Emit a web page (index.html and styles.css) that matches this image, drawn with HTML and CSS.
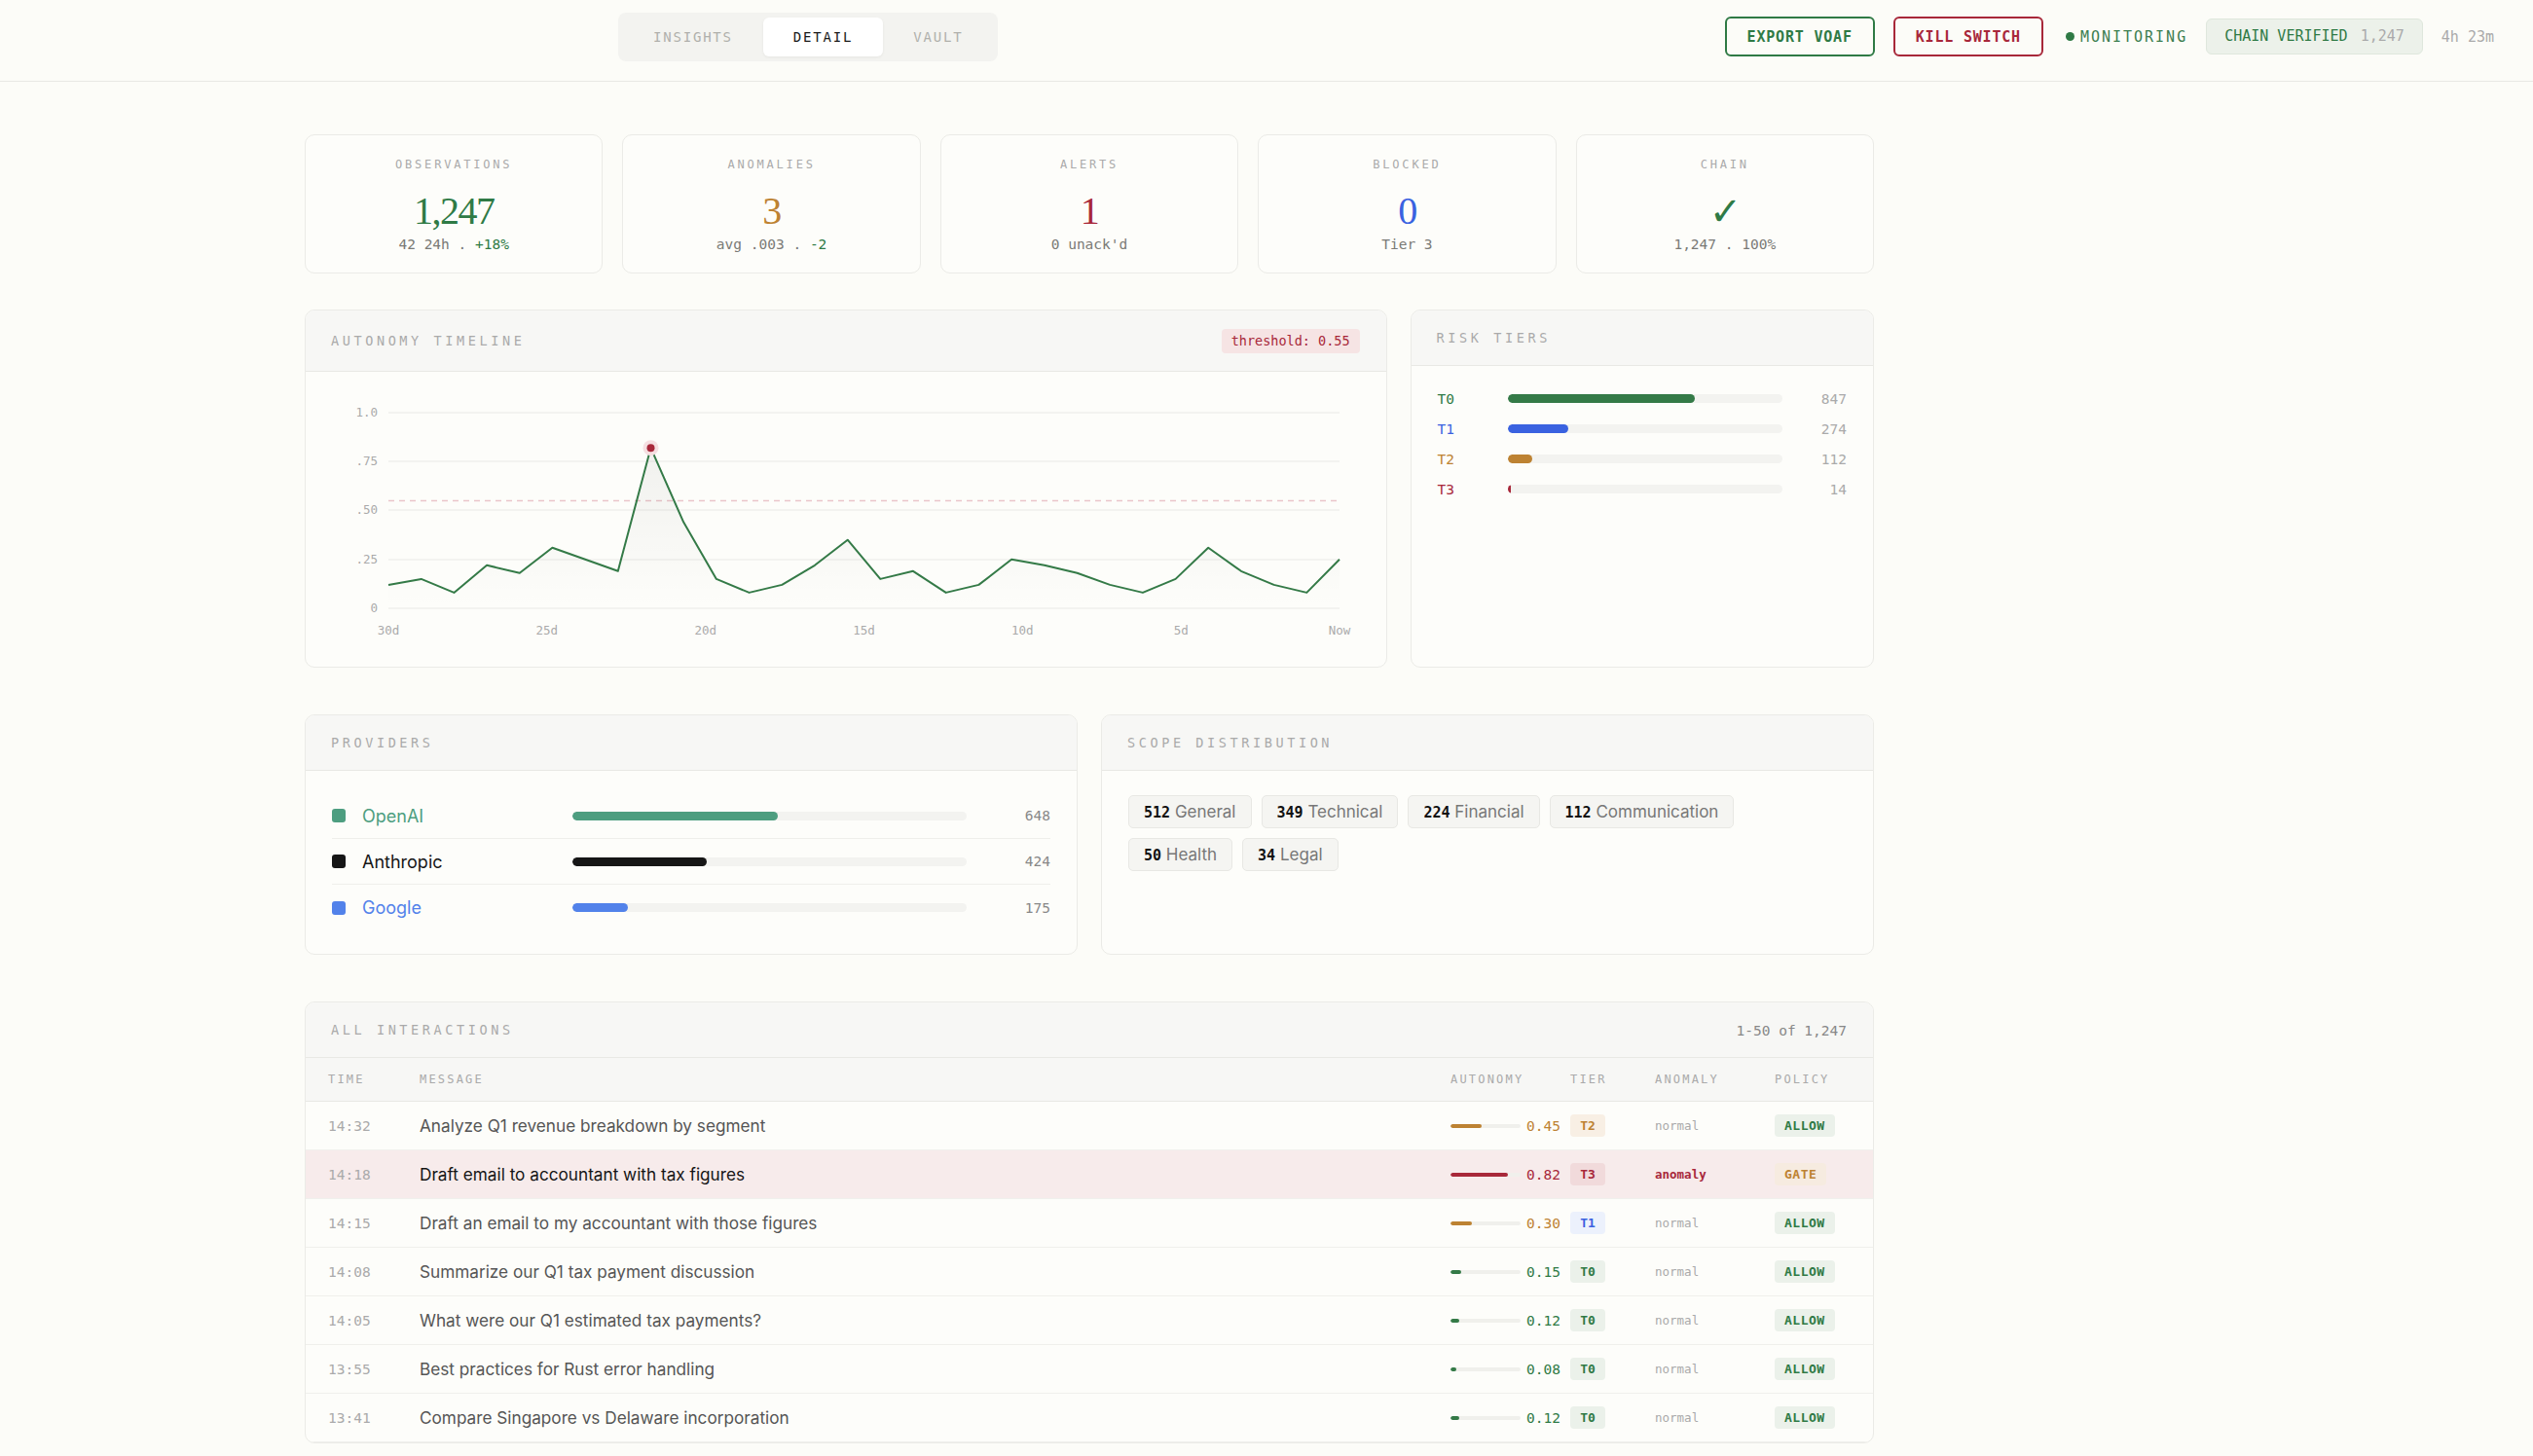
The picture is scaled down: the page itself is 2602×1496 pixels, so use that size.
FILE: index.html
```html
<!DOCTYPE html>
<html lang="en">
<head>
 <meta charset="UTF-8">
 <title>Detail</title>
 <link rel="stylesheet" href="styles.css">
</head>
<body>

 <header class="topbar">
  <nav class="tabs">
   <span class="tab">INSIGHTS</span>
   <span class="tab active">DETAIL</span>
   <span class="tab">VAULT</span>
  </nav>

  <div class="topbar-right">
   <button class="btn btn-green">EXPORT VOAF</button>
   <button class="btn btn-red">KILL SWITCH</button>
   <span class="monitoring"><i class="dot"></i>MONITORING</span>
   <span class="chain-pill">CHAIN VERIFIED <em>1,247</em></span>
   <span class="uptime">4h 23m</span>
  </div>
 </header>

 <main class="page">

  <section class="stats">
   <div class="stat">
    <div class="stat-label">OBSERVATIONS</div>
    <div class="stat-value green">1,247</div>
    <div class="stat-sub">42 24h . <span class="green">+18%</span></div>
   </div>
   <div class="stat">
    <div class="stat-label">ANOMALIES</div>
    <div class="stat-value orange">3</div>
    <div class="stat-sub">avg .003 . <span class="green">-2</span></div>
   </div>
   <div class="stat">
    <div class="stat-label">ALERTS</div>
    <div class="stat-value red">1</div>
    <div class="stat-sub">0 unack'd</div>
   </div>
   <div class="stat">
    <div class="stat-label">BLOCKED</div>
    <div class="stat-value blue">0</div>
    <div class="stat-sub">Tier 3</div>
   </div>
   <div class="stat">
    <div class="stat-label">CHAIN</div>
    <div class="stat-value green check">&#10003;</div>
    <div class="stat-sub">1,247 . 100%</div>
   </div>
  </section>

  <section class="row row-timeline">
   <div class="card">
    <div class="card-head">
     <span class="card-title">AUTONOMY TIMELINE</span>
     <span class="threshold">threshold: 0.55</span>
    </div>
    <div class="chart">
     <svg viewBox="0 0 1109 303" width="1109" height="303">
      <defs>
       <linearGradient id="fade" x1="0" y1="0" x2="0" y2="1">
        <stop offset="0" stop-color="#000" stop-opacity="0.05"/>
        <stop offset="1" stop-color="#000" stop-opacity="0"/>
       </linearGradient>
      </defs>
      <g class="grid">
       <line x1="85" y1="42" x2="1062" y2="42"/>
       <line x1="85" y1="92" x2="1062" y2="92"/>
       <line x1="85" y1="142" x2="1062" y2="142"/>
       <line x1="85" y1="193" x2="1062" y2="193"/>
       <line x1="85" y1="243" x2="1062" y2="243"/>
      </g>
      <g class="ylabels">
       <text x="74" y="46">1.0</text>
       <text x="74" y="96">.75</text>
       <text x="74" y="146">.50</text>
       <text x="74" y="197">.25</text>
       <text x="74" y="247">0</text>
      </g>
      <line class="threshold-line" x1="85" y1="132.5" x2="1062" y2="132.5"/>
      <path class="area" d="M85,243 L85,218.9 118.7,212.9 152.4,226.9 186.1,198.8 219.8,206.8 253.4,180.7 287.1,192.8 320.8,204.8 354.5,78.2 388.2,154.6 421.9,212.9 455.6,226.9 489.3,218.9 523,198.8 556.7,172.7 590.3,212.9 624,204.8 657.7,226.9 691.4,218.9 725.1,192.8 758.8,198.8 792.5,206.8 826.2,218.9 859.9,226.9 893.6,212.9 927.2,180.7 960.9,204.8 994.6,218.9 1028.3,226.9 1062,192.8 L1062,243 Z"/>
      <polyline class="line" points="85,218.9 118.7,212.9 152.4,226.9 186.1,198.8 219.8,206.8 253.4,180.7 287.1,192.8 320.8,204.8 354.5,78.2 388.2,154.6 421.9,212.9 455.6,226.9 489.3,218.9 523,198.8 556.7,172.7 590.3,212.9 624,204.8 657.7,226.9 691.4,218.9 725.1,192.8 758.8,198.8 792.5,206.8 826.2,218.9 859.9,226.9 893.6,212.9 927.2,180.7 960.9,204.8 994.6,218.9 1028.3,226.9 1062,192.8"/>
      <circle cx="354.5" cy="78.2" r="8" fill="#f5dfe1"/>
      <circle cx="354.5" cy="78.2" r="4" fill="#a8283a"/>
      <g class="xlabels">
       <text x="85" y="270">30d</text>
       <text x="247.8" y="270">25d</text>
       <text x="410.7" y="270">20d</text>
       <text x="573.5" y="270">15d</text>
       <text x="736.3" y="270">10d</text>
       <text x="899.2" y="270">5d</text>
       <text x="1062" y="270">Now</text>
      </g>
     </svg>
    </div>
   </div>

   <div class="card">
    <div class="card-head">
     <span class="card-title">RISK TIERS</span>
    </div>
    <div class="tiers">
     <div class="tier-row">
      <span class="tier-name green">T0</span>
      <div class="track"><div class="fill bg-green" style="width: 68%"></div></div>
      <span class="tier-count">847</span>
     </div>
     <div class="tier-row">
      <span class="tier-name blue">T1</span>
      <div class="track"><div class="fill bg-blue" style="width: 22%"></div></div>
      <span class="tier-count">274</span>
     </div>
     <div class="tier-row">
      <span class="tier-name orange">T2</span>
      <div class="track"><div class="fill bg-orange" style="width: 9%"></div></div>
      <span class="tier-count">112</span>
     </div>
     <div class="tier-row">
      <span class="tier-name red">T3</span>
      <div class="track"><div class="fill bg-red" style="width: 1.1%"></div></div>
      <span class="tier-count">14</span>
     </div>
    </div>
   </div>
  </section>

  <section class="row row-half">
   <div class="card">
    <div class="card-head">
     <span class="card-title">PROVIDERS</span>
    </div>
    <div class="providers">
     <div class="provider">
      <span class="provider-name openai"><i class="sq"></i>OpenAI</span>
      <div class="track"><div class="fill" style="width: 52%; background: #4d9e80"></div></div>
      <span class="provider-count">648</span>
     </div>
     <div class="provider">
      <span class="provider-name anthropic"><i class="sq"></i>Anthropic</span>
      <div class="track"><div class="fill" style="width: 34%; background: #161616"></div></div>
      <span class="provider-count">424</span>
     </div>
     <div class="provider">
      <span class="provider-name google"><i class="sq"></i>Google</span>
      <div class="track"><div class="fill" style="width: 14%; background: #5282ea"></div></div>
      <span class="provider-count">175</span>
     </div>
    </div>
   </div>

   <div class="card">
    <div class="card-head">
     <span class="card-title">SCOPE DISTRIBUTION</span>
    </div>
    <div class="chips">
     <span class="chip"><b>512</b> General</span>
     <span class="chip"><b>349</b> Technical</span>
     <span class="chip"><b>224</b> Financial</span>
     <span class="chip"><b>112</b> Communication</span>
     <span class="chip"><b>50</b> Health</span>
     <span class="chip"><b>34</b> Legal</span>
    </div>
   </div>
  </section>

  <section class="card interactions">
   <div class="card-head">
    <span class="card-title">ALL INTERACTIONS</span>
    <span class="range">1-50 of 1,247</span>
   </div>
   <div class="irow ihead">
    <span>TIME</span>
    <span>MESSAGE</span>
    <span>AUTONOMY</span>
    <span>TIER</span>
    <span>ANOMALY</span>
    <span>POLICY</span>
   </div>

   <div class="irow">
    <span class="time">14:32</span>
    <span class="msg">Analyze Q1 revenue breakdown by segment</span>
    <span class="auto orange"><i class="mini"><b class="bg-orange" style="width: 45%"></b></i>0.45</span>
    <span><em class="tag t2">T2</em></span>
    <span class="anom">normal</span>
    <span><em class="policy allow">ALLOW</em></span>
   </div>
   <div class="irow flagged">
    <span class="time">14:18</span>
    <span class="msg">Draft email to accountant with tax figures</span>
    <span class="auto red"><i class="mini"><b class="bg-red" style="width: 82%"></b></i>0.82</span>
    <span><em class="tag t3">T3</em></span>
    <span class="anom hit">anomaly</span>
    <span><em class="policy gate">GATE</em></span>
   </div>
   <div class="irow">
    <span class="time">14:15</span>
    <span class="msg">Draft an email to my accountant with those figures</span>
    <span class="auto orange"><i class="mini"><b class="bg-orange" style="width: 30%"></b></i>0.30</span>
    <span><em class="tag t1">T1</em></span>
    <span class="anom">normal</span>
    <span><em class="policy allow">ALLOW</em></span>
   </div>
   <div class="irow">
    <span class="time">14:08</span>
    <span class="msg">Summarize our Q1 tax payment discussion</span>
    <span class="auto green"><i class="mini"><b class="bg-green" style="width: 15%"></b></i>0.15</span>
    <span><em class="tag t0">T0</em></span>
    <span class="anom">normal</span>
    <span><em class="policy allow">ALLOW</em></span>
   </div>
   <div class="irow">
    <span class="time">14:05</span>
    <span class="msg">What were our Q1 estimated tax payments?</span>
    <span class="auto green"><i class="mini"><b class="bg-green" style="width: 12%"></b></i>0.12</span>
    <span><em class="tag t0">T0</em></span>
    <span class="anom">normal</span>
    <span><em class="policy allow">ALLOW</em></span>
   </div>
   <div class="irow">
    <span class="time">13:55</span>
    <span class="msg">Best practices for Rust error handling</span>
    <span class="auto green"><i class="mini"><b class="bg-green" style="width: 8%"></b></i>0.08</span>
    <span><em class="tag t0">T0</em></span>
    <span class="anom">normal</span>
    <span><em class="policy allow">ALLOW</em></span>
   </div>
   <div class="irow">
    <span class="time">13:41</span>
    <span class="msg">Compare Singapore vs Delaware incorporation</span>
    <span class="auto green"><i class="mini"><b class="bg-green" style="width: 12%"></b></i>0.12</span>
    <span><em class="tag t0">T0</em></span>
    <span class="anom">normal</span>
    <span><em class="policy allow">ALLOW</em></span>
   </div>
  </section>

 </main>

</body>
</html>
```

FILE: styles.css
```css
 * {
   box-sizing: border-box;
  }

 body {
   margin: 0;
   background-color: #fcfcf8;
   font-family: Inter, "Noto Sans", sans-serif;
   color: #1a1a1a;
  }

  /* colours */
  .green { color: #2f7a45; }
  .orange { color: #bd8232; }
  .red { color: #a8283a; }
  .blue { color: #3a62e0; }
  .bg-green { background: #347a47; }
  .bg-orange { background: #bd8232; }
  .bg-red { background: #a8283a; }
  .bg-blue { background: #3a62e0; }

  /* top bar */
  .topbar {
   height: 84px;
   padding: 0 40px 8px 635px;
   border-bottom: 1px solid #e8e8e4;
   display: flex;
   align-items: center;
   font-family: "DejaVu Sans Mono", monospace;
  }

  .tabs {
   display: flex;
   padding: 5px;
   background: #f3f3f0;
   border-radius: 8px;
  }

  .tab {
   height: 40px;
   line-height: 40px;
   padding: 0 31px;
   font-size: 14px;
   letter-spacing: 1.8px;
   color: #b0b0ac;
   border-radius: 6px;
  }

  .tab.active {
   background: #fff;
   color: #1a1a1a;
   box-shadow: 0 1px 3px rgba(0,0,0,0.06);
  }

  .topbar-right {
   margin-left: auto;
   display: flex;
   align-items: center;
   gap: 19px;
  }

  .btn {
   height: 41px;
   padding: 0 21px;
   background: transparent;
   border: 2px solid;
   border-radius: 6px;
   font-family: "DejaVu Sans Mono", monospace;
   font-size: 15px;
   font-weight: bold;
   letter-spacing: 0.8px;
   cursor: pointer;
  }

  .btn-green { color: #2f7a45; border-color: #2f7a45; }
  .btn-red { color: #a8283a; border-color: #a8283a; }

  .monitoring {
   display: flex;
   align-items: center;
   gap: 6px;
   font-size: 15px;
   letter-spacing: 2px;
   color: #3d7e50;
   margin-left: 4px;
  }

  .monitoring .dot {
   width: 9px;
   height: 9px;
   border-radius: 50%;
   background: #2f7a45;
  }

  .chain-pill {
   height: 37px;
   line-height: 35px;
   padding: 0 18px;
   background: #ecf1ea;
   border: 1px solid #dfe7dd;
   border-radius: 6px;
   font-size: 15px;
   color: #2f7a45;
  }

  .chain-pill em {
   font-style: normal;
   color: #aaa;
   margin-left: 4px;
  }

  .uptime {
   font-size: 15px;
   color: #aaa;
  }

  /* page */
  .page {
   width: 1612px;
   margin-left: 313px;
   padding: 54px 0 0;
  }

  .card {
   background: #fdfdfa;
   border: 1px solid #ebebe7;
   border-radius: 10px;
   overflow: hidden;
  }

  .card-head {
   display: flex;
   align-items: center;
   justify-content: space-between;
   padding: 19px 27px 18px 26px;
   background: #f7f7f5;
   border-bottom: 1px solid #e8e8e4;
  }

  .card-title {
   font-family: "DejaVu Sans Mono", monospace;
   font-size: 13.5px;
   line-height: 19px;
   letter-spacing: 3.6px;
   color: #aaa;
  }

  /* stats */
  .stats {
   display: grid;
   grid-template-columns: repeat(5, 1fr);
   gap: 20px;
   margin-bottom: 37px;
  }

  .stat {
   height: 143px;
   padding-top: 22px;
   text-align: center;
   background: #fdfdfa;
   border: 1px solid #ebebe7;
   border-radius: 10px;
  }

  .stat-label {
   font-family: "DejaVu Sans Mono", monospace;
   font-size: 12px;
   line-height: 16px;
   letter-spacing: 2.8px;
   color: #aaa;
  }

  .stat-value {
   margin-top: 18px;
   font-family: "Liberation Serif", serif;
   font-size: 40px;
   line-height: 44px;
   letter-spacing: -1.5px;
  }

  .stat-value.check {
   font-family: "DejaVu Sans", sans-serif;
   font-size: 40px;
   font-weight: bold;
  }

  .stat-sub {
   margin-top: 2px;
   font-family: "DejaVu Sans Mono", monospace;
   font-size: 14.5px;
   line-height: 20px;
   color: #7a7a76;
  }

  /* rows of cards */
  .row {
   display: grid;
   gap: 24px;
   margin-bottom: 48px;
  }

  .row-timeline {
   grid-template-columns: 7fr 3fr;
  }

  .row-half {
   grid-template-columns: 1fr 1fr;
  }

  .threshold {
   height: 25px;
   line-height: 25px;
   padding: 0 10px;
   background: #f6e4e4;
   border-radius: 4px;
   font-family: "DejaVu Sans Mono", monospace;
   font-size: 13.5px;
   color: #a8283a;
  }

  .chart svg {
   display: block;
  }

  .grid line {
   stroke: #efefec;
   stroke-width: 1.5;
  }

  .threshold-line {
   stroke: #eac5ca;
   stroke-width: 1.5;
   stroke-dasharray: 6 5;
  }

  .area {
   fill: url(#fade);
  }

  .line {
   fill: none;
   stroke: #347a47;
   stroke-width: 2;
   stroke-linejoin: round;
  }

  .ylabels text, .xlabels text {
   font-family: "DejaVu Sans Mono", monospace;
   font-size: 12.5px;
   fill: #aaa;
  }

  .ylabels text { text-anchor: end; }
  .xlabels text { text-anchor: middle; }

  /* risk tiers */
  .tiers {
   padding: 18px 27px 0;
  }

  .tier-row {
   display: grid;
   grid-template-columns: 72px 1fr 66px;
   align-items: center;
   height: 31px;
  }

  .tier-name {
   font-family: "DejaVu Sans Mono", monospace;
   font-size: 14.5px;
  }

  .tier-count, .provider-count {
   text-align: right;
   font-family: "DejaVu Sans Mono", monospace;
   font-size: 14.5px;
   color: #aaa;
  }

  .track {
   height: 9px;
   background: #f3f3f0;
   border-radius: 5px;
   overflow: hidden;
  }

  .fill {
   height: 100%;
   border-radius: 5px;
  }

  /* providers */
  .providers {
   padding: 23px 27px 24px;
  }

  .provider {
   display: grid;
   grid-template-columns: 247px 1fr 86px;
   align-items: center;
   height: 47px;
   border-bottom: 1px solid #efefeb;
  }

  .provider:last-child {
   border-bottom: none;
  }

  .provider-count {
   color: #888;
  }

  .provider-name {
   display: flex;
   align-items: center;
   gap: 17px;
   font-size: 18px;
  }

  .provider-name .sq {
   width: 14px;
   height: 14px;
   border-radius: 3px;
   background: currentColor;
  }

  .openai { color: #4d9e80; }
  .anthropic { color: #161616; }
  .google { color: #5282ea; }

  /* scope chips */
  .chips {
   display: flex;
   flex-wrap: wrap;
   gap: 10px;
   max-width: 700px;
   padding: 25px 27px;
  }

  .chip {
   height: 34px;
   line-height: 32px;
   padding: 0 15px;
   background: #f5f5f2;
   border: 1px solid #e8e8e4;
   border-radius: 5px;
   font-size: 17px;
   color: #777;
  }

  .chip b {
   font-family: "DejaVu Sans Mono", monospace;
   font-size: 15px;
   color: #111;
  }

  /* interactions */
  .interactions {
   margin-bottom: 40px;
  }

  .range {
   font-family: "DejaVu Sans Mono", monospace;
   font-size: 14.5px;
   color: #888;
  }

  .irow {
   display: grid;
   grid-template-columns: 94px 1fr 123px 87px 123px 75px;
   align-items: center;
   height: 50px;
   padding: 0 26px 0 23px;
   border-bottom: 1px solid #f0f0ec;
  }

  .irow.ihead {
   height: 45px;
   background: #f7f7f5;
   border-bottom: 1px solid #e8e8e4;
   font-family: "DejaVu Sans Mono", monospace;
   font-size: 12px;
   letter-spacing: 2.2px;
   color: #aaa;
  }

  .irow.flagged {
   background: #f7ebeb;
  }

  .time {
   font-family: "DejaVu Sans Mono", monospace;
   font-size: 14.5px;
   color: #aaa;
  }

  .msg {
   font-size: 17.2px;
   color: #555;
  }

  .flagged .msg {
   color: #151515;
  }

  .auto {
   display: flex;
   align-items: center;
   gap: 6px;
   font-family: "DejaVu Sans Mono", monospace;
   font-size: 14.5px;
  }

  .mini {
   width: 72px;
   height: 4px;
   background: #f0f0ec;
   border-radius: 2px;
   overflow: hidden;
   display: block;
  }

  .mini b {
   display: block;
   height: 100%;
   border-radius: 2px;
  }

  .tag, .policy {
   display: inline-block;
   height: 23px;
   line-height: 24px;
   border-radius: 4px;
   font-style: normal;
   font-family: "DejaVu Sans Mono", monospace;
   font-size: 13px;
   font-weight: bold;
  }

  .tag {
   width: 36px;
   text-align: center;
  }

  .t0 { color: #2f7a45; background: #ebf1ea; }
  .t1 { color: #3a62e0; background: #ecf1fc; }
  .t2 { color: #bd8232; background: #f8efe4; }
  .t3 { color: #a8283a; background: #f1dadb; }

  .anom {
   font-family: "DejaVu Sans Mono", monospace;
   font-size: 12.5px;
   color: #aaa;
  }

  .anom.hit {
   color: #a8283a;
   font-weight: bold;
  }

  .policy {
   padding: 0 10px;
   letter-spacing: 0.5px;
  }

  .allow { color: #2f7a45; background: #ebf1ea; }
  .gate { color: #bd8232; background: #f6ebe0; }
```
